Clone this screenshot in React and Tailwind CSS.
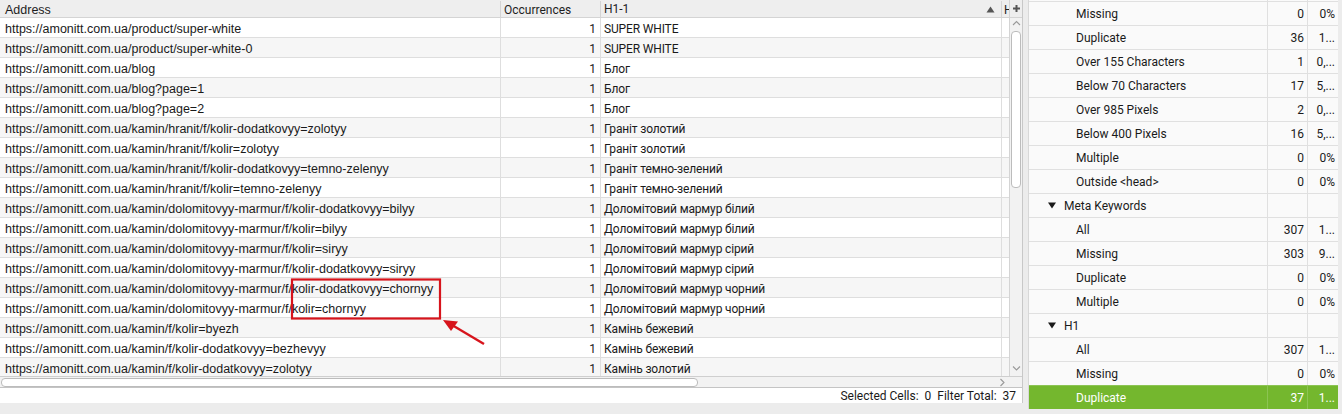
import React from 'react';

const rows = [
  ['https://amonitt.com.ua/product/super-white', 'SUPER WHITE'],
  ['https://amonitt.com.ua/product/super-white-0', 'SUPER WHITE'],
  ['https://amonitt.com.ua/blog', 'Блог'],
  ['https://amonitt.com.ua/blog?page=1', 'Блог'],
  ['https://amonitt.com.ua/blog?page=2', 'Блог'],
  ['https://amonitt.com.ua/kamin/hranit/f/kolir-dodatkovyy=zolotyy', 'Граніт золотий'],
  ['https://amonitt.com.ua/kamin/hranit/f/kolir=zolotyy', 'Граніт золотий'],
  ['https://amonitt.com.ua/kamin/hranit/f/kolir-dodatkovyy=temno-zelenyy', 'Граніт темно-зелений'],
  ['https://amonitt.com.ua/kamin/hranit/f/kolir=temno-zelenyy', 'Граніт темно-зелений'],
  ['https://amonitt.com.ua/kamin/dolomitovyy-marmur/f/kolir-dodatkovyy=bilyy', 'Доломітовий мармур білий'],
  ['https://amonitt.com.ua/kamin/dolomitovyy-marmur/f/kolir=bilyy', 'Доломітовий мармур білий'],
  ['https://amonitt.com.ua/kamin/dolomitovyy-marmur/f/kolir=siryy', 'Доломітовий мармур сірий'],
  ['https://amonitt.com.ua/kamin/dolomitovyy-marmur/f/kolir-dodatkovyy=siryy', 'Доломітовий мармур сірий'],
  ['https://amonitt.com.ua/kamin/dolomitovyy-marmur/f/kolir-dodatkovyy=chornyy', 'Доломітовий мармур чорний'],
  ['https://amonitt.com.ua/kamin/dolomitovyy-marmur/f/kolir=chornyy', 'Доломітовий мармур чорний'],
  ['https://amonitt.com.ua/kamin/f/kolir=byezh', 'Камінь бежевий'],
  ['https://amonitt.com.ua/kamin/f/kolir-dodatkovyy=bezhevyy', 'Камінь бежевий'],
  ['https://amonitt.com.ua/kamin/f/kolir-dodatkovyy=zolotyy', 'Камінь золотий'],
];

const stats = [
  { label: 'Missing', n: '0', p: '0%' },
  { label: 'Duplicate', n: '36', p: '1...' },
  { label: 'Over 155 Characters', n: '1', p: '0,...' },
  { label: 'Below 70 Characters', n: '17', p: '5,...' },
  { label: 'Over 985 Pixels', n: '2', p: '0,...' },
  { label: 'Below 400 Pixels', n: '16', p: '5,...' },
  { label: 'Multiple', n: '0', p: '0%' },
  { label: 'Outside <head>', n: '0', p: '0%' },
  { label: 'Meta Keywords', group: true },
  { label: 'All', n: '307', p: '1...' },
  { label: 'Missing', n: '303', p: '9...' },
  { label: 'Duplicate', n: '0', p: '0%' },
  { label: 'Multiple', n: '0', p: '0%' },
  { label: 'H1', group: true },
  { label: 'All', n: '307', p: '1...' },
  { label: 'Missing', n: '0', p: '0%' },
  { label: 'Duplicate', n: '37', p: '1...', active: true },
];

const roboto = "font-['Roboto',sans-serif]";

function Chevron({ dir }) {
  const d = {
    up: 'M1 5 L4.5 1.5 L8 5',
    down: 'M1 1.5 L4.5 5 L8 1.5',
    right: 'M1.5 1 L5 4.5 L1.5 8',
  }[dir];
  return (
    <svg width="9" height="9" viewBox="0 0 9 9" className="block">
      <path d={d} fill="none" stroke="#9a9a9a" strokeWidth="1.1" />
    </svg>
  );
}

function LeftTable() {
  return (
    <div className="w-[1023px] flex flex-col border-r border-[#c8c8c8]">
      <div className="flex h-[376px]">
        <div className="w-[1009px] flex flex-col overflow-hidden">
          <div className={`flex h-[18px] bg-[#eeeeee] border-b border-[#d4d4d4] text-[12px] text-[#1e1e1e] leading-[18px] pt-[1px] ${roboto}`}>
            <div className="w-[501px] pl-[5px] border-r border-[#d4d4d4] text-[12.5px] font-['Liberation_Sans',sans-serif]">Address</div>
            <div className="w-[100px] pl-[3px] border-r border-[#d4d4d4]">Occurrences</div>
            <div className="w-[401px] pl-[3px] pr-[6px] border-r border-[#d4d4d4] flex items-center justify-between">
              <span>H1-1</span>
              <svg width="9" height="7" viewBox="0 0 9 7"><polygon points="0.5,6.5 4.5,0.5 8.5,6.5" fill="#555" /></svg>
            </div>
            <div className="w-[7px] overflow-hidden pl-[2px]">H</div>
          </div>
          <div className="h-[358px] overflow-hidden">
            {rows.map(([url, h1], i) => (
              <div key={i} className={`flex h-[20px] border-b border-[#dedede] text-[12px] leading-[19px] text-[#1a1a1a] ${i % 2 ? 'bg-[#f6f6f6]' : 'bg-white'}`}>
                <div className="w-[501px] pl-[5px] pt-[2px] border-r border-[#dedede] whitespace-nowrap overflow-hidden text-[12.5px] font-['Liberation_Sans',sans-serif]">{url}</div>
                <div className={`w-[100px] pr-[4px] pt-[2px] text-right border-r border-[#dedede] ${roboto}`}>1</div>
                <div className={`w-[401px] pl-[3px] pt-[2px] border-r border-[#dedede] whitespace-nowrap tracking-[-0.15px] ${roboto}`}>{h1}</div>
                <div className="w-[7px]"></div>
              </div>
            ))}
          </div>
        </div>
        <div className="w-[13px] flex flex-col border-l border-[#d4d4d4]">
          <div className="h-[18px] bg-[#eeeeee] border-b border-[#d4d4d4] flex items-center justify-center">
            <svg width="9" height="9" viewBox="0 0 9 9"><path d="M4.5 1 V8 M1 4.5 H8" stroke="#555" strokeWidth="2" /></svg>
          </div>
          <div className="flex-1 bg-[#f2f2f2] flex flex-col items-center pt-[2px] pb-[2px]">
            <Chevron dir="up" />
            <div className="mt-[2px] w-[10px] h-[157px] bg-white border border-[#bcbcbc] rounded-[4px]"></div>
            <div className="flex-1"></div>
            <Chevron dir="down" />
          </div>
        </div>
      </div>
      <div className="h-[12px] bg-[#f2f2f2] border-t border-[#cfcfcf] border-b border-b-[#c4c4c4] flex items-center">
        <div className="ml-[1px] w-[697px] h-[9px] bg-white border border-[#bcbcbc] rounded-[4px]"></div>
        <div className="flex-1"></div>
        <div className="mr-[14px]"><Chevron dir="right" /></div>
      </div>
      <div className={`h-[15px] bg-white flex items-center justify-end pr-[6px] pt-[1px] text-[12px] text-[#1a1a1a] whitespace-pre ${roboto}`}>
        Selected Cells:  0  Filter Total:  37
      </div>
    </div>
  );
}

function StatsPanel() {
  return (
    <div className={`w-[310px] ml-[5px] flex flex-col bg-[#fafafa] border-l border-[#d8d8d8] text-[12px] ${roboto}`}>
      <div className="h-[1px] flex">
        <div className="w-[239px] border-r border-[#e0e0e0]"></div>
        <div className="w-[40px] border-r border-[#e0e0e0]"></div>
      </div>
      {stats.map((s, i) => (
        <div
          key={i}
          className={`flex h-[24px] border-t ${s.active ? 'bg-[#74b72e] text-white border-[#8cc453]' : 'text-[#1a1a1a] border-[#e0e0e0]'}`}
        >
          <div className={`w-[239px] flex items-center border-r ${s.active ? 'border-[#8cc453]' : 'border-[#e0e0e0]'} ${s.group ? 'pl-[19px]' : 'pl-[47px]'}`}>
            {s.group && (
              <svg width="8" height="7" viewBox="0 0 8 7" className="mr-[8px]"><polygon points="0,0.5 8,0.5 4,6.5" fill="#1a1a1a" /></svg>
            )}
            {s.label}
          </div>
          <div className={`w-[40px] flex items-center justify-end pr-[3px] border-r ${s.active ? 'border-[#8cc453]' : 'border-[#e0e0e0]'}`}>{s.n}</div>
          <div className="w-[30px] flex items-center justify-end pr-[3px]">{s.p}</div>
        </div>
      ))}
    </div>
  );
}

export default function App() {
  return (
    <div className="relative w-[1342px] h-[414px] bg-[#ececec] flex items-start overflow-hidden">
      <LeftTable />
      <StatsPanel />
      <svg className="absolute left-0 top-0 pointer-events-none" width="1342" height="414">
        <rect x="292" y="279.5" width="148" height="39" fill="none" stroke="#d7141c" strokeWidth="2.2" />
        <line x1="484" y1="344" x2="452" y2="325" stroke="#d7141c" strokeWidth="2.4" />
        <polygon points="443,320 458,321.5 451,331" fill="#d7141c" />
      </svg>
    </div>
  );
}
